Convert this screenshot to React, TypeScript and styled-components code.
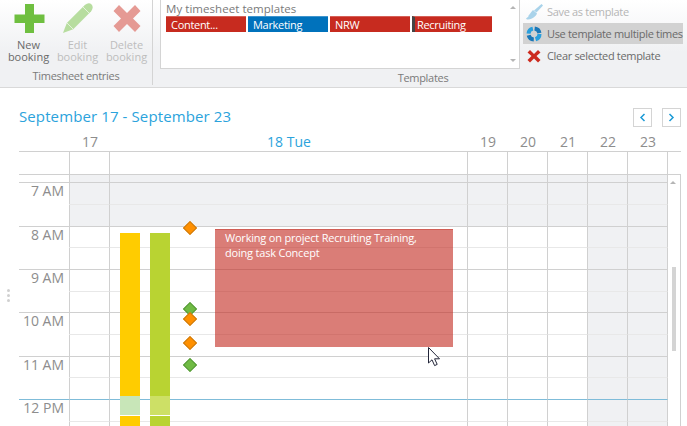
import React from "react";
import styled, { createGlobalStyle } from "styled-components";

const FONT = `"Open Sans", "Noto Sans", "Liberation Sans", sans-serif`;

const GlobalStyle = createGlobalStyle`
	html, body {
		margin: 0;
		padding: 0;
		background: #fff;
		font-family: ${FONT};
	}
`;

const SLOTS = [
	{ label: "7 AM", height: 22, line: "half", gray: true },
	{ label: "", height: 22, line: "hour", gray: true },
	{ label: "8 AM", height: 21, line: "half", gray: false },
	{ label: "", height: 22, line: "hour", gray: false },
	{ label: "9 AM", height: 22, line: "half", gray: false },
	{ label: "", height: 21, line: "hour", gray: false },
	{ label: "10 AM", height: 22, line: "half", gray: false },
	{ label: "", height: 22, line: "hour", gray: false },
	{ label: "11 AM", height: 21, line: "half", gray: false },
	{ label: "", height: 22, line: "now", gray: false },
	{ label: "12 PM", height: 22, line: "half", gray: false },
	{ label: "", height: 22, line: "hour", gray: false },
];

const DAYS = [
	{ label: "17", weekend: false },
	{ label: "18 Tue", weekend: false, today: true },
	{ label: "19", weekend: false },
	{ label: "20", weekend: false },
	{ label: "21", weekend: false },
	{ label: "22", weekend: true },
	{ label: "23", weekend: true },
];

const CHIPS = [
	{ label: "Content...", color: "#c72b1f" },
	{ label: "Marketing", color: "#0072bc" },
	{ label: "NRW", color: "#c72b1f" },
	{ label: "Recruiting", color: "#c72b1f", marked: true },
];

const DIAMONDS = [
	{ top: 76, color: "#ff9000", edge: "#c97a10" },
	{ top: 157, color: "#70bb44", edge: "#55983a" },
	{ top: 167, color: "#ff9000", edge: "#c97a10" },
	{ top: 191, color: "#ff9000", edge: "#c97a10" },
	{ top: 213, color: "#70bb44", edge: "#55983a" },
];

const App = () => {
	return (
		<Page>
			<GlobalStyle />
			<Ribbon>
				<EntriesGroup>
					<BigButtons>
						<BigButton>
							<IconSlot>
								<svg width="32" height="32" viewBox="0 0 32 32">
									<path d="M12 2h9v10.5h10.5v8.5H21v10H12V21H1.5v-8.5H12z" fill="#6fbf40" />
								</svg>
							</IconSlot>
							New
							<br />
							booking
						</BigButton>
						<BigButton $disabled>
							<IconSlot>
								<svg width="32" height="32" viewBox="0 0 32 32">
									<path
										d="M1 31L4.8 21 22.8 3Q27 0 29.5 2.5 32 5 29.2 9.2L11.2 27.2z"
										fill="#b7dd9f"
									/>
									<path d="M21 5l6 6M5 21l6 6" stroke="#e4f2da" strokeWidth="1" fill="none" />
								</svg>
							</IconSlot>
							Edit
							<br />
							booking
						</BigButton>
						<BigButton $disabled>
							<IconSlot>
								<svg width="32" height="32" viewBox="0 0 32 32">
									<path
										d="M8 3L16 11 24 3 29.5 9 22 16.5 29.5 24 24 30 16 22 8 30 2.5 24 10 16.5 2.5 9z"
										fill="#e59a94"
									/>
								</svg>
							</IconSlot>
							Delete
							<br />
							booking
						</BigButton>
					</BigButtons>
					<GroupLabel>Timesheet entries</GroupLabel>
				</EntriesGroup>
				<TemplatesGroup>
					<TemplatesTop>
						<TemplateBox>
							<TemplateList>
								<TemplateTitle>My timesheet templates</TemplateTitle>
								<ChipRow>
									{CHIPS.map((chip) => (
										<Chip key={chip.label} $color={chip.color} $marked={chip.marked}>
											{chip.label}
										</Chip>
									))}
								</ChipRow>
							</TemplateList>
							<BoxArrows>
								<ArrowUp />
								<ArrowDown />
							</BoxArrows>
						</TemplateBox>
						<ActionList>
							<Action $disabled>
								<svg width="18" height="18" viewBox="0 0 18 18">
									<path d="M16.5 1L18 2.5 11.5 9.5 9 7.5z" fill="#a9d3ea" />
									<path
										d="M8 7L12 10.5C11 13 8 16 3 16.5 2 16.5 1 16 1 15.5 3 14 4 13 3.5 12.5 5 11 6.5 8.5 8 7z"
										fill="#a9d3ea"
									/>
								</svg>
								Save as template
							</Action>
							<Action $active>
								<svg width="18" height="18" viewBox="0 0 18 18">
									<circle
										cx="9"
										cy="9"
										r="5.5"
										fill="none"
										stroke="#2a9fdc"
										strokeWidth="4"
										strokeDasharray="6.8 10.48"
									/>
									<circle
										cx="9"
										cy="9"
										r="5.5"
										fill="none"
										stroke="#1b78b8"
										strokeWidth="4"
										strokeDasharray="6.8 10.48"
										strokeDashoffset="8.64"
									/>
								</svg>
								Use template multiple times
							</Action>
							<Action>
								<svg width="18" height="18" viewBox="0 0 18 18">
									<path
										d="M5 3L9 7 13 3 15.5 5.5 11.5 9 15.5 13 13 15.5 9 11.5 5 15.5 2.5 13 6.5 9 2.5 5.5z"
										fill="#cc2a1e"
									/>
								</svg>
								Clear selected template
							</Action>
						</ActionList>
					</TemplatesTop>
					<TemplatesLabel>Templates</TemplatesLabel>
				</TemplatesGroup>
			</Ribbon>

			<Calendar>
				<TitleRow>
					<RangeTitle>September 17 - September 23</RangeTitle>
					<PagerButtons>
						<PagerButton>
							<svg width="7" height="9" viewBox="0 0 7 9">
								<path d="M5.5 1L2 4.5 5.5 8" fill="none" stroke="#1b9ad6" strokeWidth="1.5" />
							</svg>
						</PagerButton>
						<PagerButton>
							<svg width="7" height="9" viewBox="0 0 7 9">
								<path d="M1.5 1L5 4.5 1.5 8" fill="none" stroke="#1b9ad6" strokeWidth="1.5" />
							</svg>
						</PagerButton>
					</PagerButtons>
				</TitleRow>

				<DayHeader>
					<span />
					{DAYS.map((day) => (
						<DayLabel key={day.label} $today={day.today}>
							{day.label}
						</DayLabel>
					))}
				</DayHeader>

				<Columns>
					<AllDayRow>
						<GutterCell />
						{DAYS.map((day) => (
							<GutterCell key={day.label} />
						))}
					</AllDayRow>
					<BandRow>
						<GutterCell />
						{DAYS.map((day) => (
							<BandCell key={day.label} />
						))}
					</BandRow>
					{SLOTS.map((slot, i) => (
						<SlotRow key={i} $height={slot.height}>
							<TimeCell $line={slot.line}>{slot.label}</TimeCell>
							{DAYS.map((day) => (
								<DayCell
									key={day.label}
									$line={slot.line}
									$gray={slot.gray || day.weekend}
								/>
							))}
						</SlotRow>
					))}

					<Bar $left={101} $color="#ffcc00" $pale="#c8e6b8" />
					<Bar $left={131} $color="#b9d332" $pale="#cde066" />
					{DIAMONDS.map((d) => (
						<Diamond key={d.top} $top={d.top} $color={d.color} $edge={d.edge} />
					))}
					<Booking>
						Working on project Recruiting Training,
						<br />
						doing task Concept
					</Booking>
					<Cursor width="13" height="20" viewBox="0 0 13 20">
						<path
							d="M0.5 0.5V16L4 12.8 6.6 18.6 9.2 17.4 6.6 11.8H11.5z"
							fill="#fff"
							stroke="#23263a"
							strokeWidth="1"
						/>
					</Cursor>
				</Columns>

				<ScrollTrack>
					<ArrowUp />
					<ScrollThumb />
				</ScrollTrack>
			</Calendar>

			<Grip>
				<GripDot />
				<GripDot />
				<GripDot />
			</Grip>
		</Page>
	);
};

const Page = styled.div`
	position: relative;
	width: 687px;
	height: 426px;
	overflow: hidden;
	background: #fff;
	color: #6f6f6f;
`;

const Ribbon = styled.div`
	display: flex;
	height: 88px;
	box-sizing: border-box;
	border-bottom: 1px solid #d9d9d9;
	background: linear-gradient(#ffffff, #f0f1f3 60%);
`;

const EntriesGroup = styled.div`
	display: flex;
	flex-direction: column;
	width: 153px;
	height: 85px;
	box-sizing: border-box;
	border-right: 1px solid #d4d4d4;
`;

const BigButtons = styled.div`
	display: flex;
	flex: 1;
	padding-left: 4px;
`;

const BigButton = styled.div<{ $disabled?: boolean }>`
	width: 49px;
	font-size: 11px;
	line-height: 12px;
	text-align: center;
	color: ${(p) => (p.$disabled ? "#bdbdbd" : "#6a6a6a")};
`;

const IconSlot = styled.div`
	display: flex;
	justify-content: center;
	height: 39px;
	padding-top: 2px;
	box-sizing: border-box;
`;

const GroupLabel = styled.div`
	height: 17px;
	font-size: 11px;
	line-height: 15px;
	letter-spacing: -0.3px;
	text-align: center;
	color: #7a7a7a;
`;

const TemplatesLabel = styled(GroupLabel)`
	padding-left: 6px;
`;

const TemplatesGroup = styled.div`
	display: flex;
	flex: 1;
	flex-direction: column;
`;

const TemplatesTop = styled.div`
	display: flex;
	flex: 1;
	padding-left: 7px;
`;

const TemplateBox = styled.div`
	display: flex;
	justify-content: space-between;
	width: 360px;
	height: 69px;
	box-sizing: border-box;
	border: 1px solid #d4d4d4;
	border-top: none;
	background: #fff;
`;

const TemplateList = styled.div`
	padding-left: 5px;
`;

const TemplateTitle = styled.div`
	height: 16px;
	font-size: 11.5px;
	line-height: 18px;
	letter-spacing: 0.05px;
	color: #7a7a7a;
`;

const ChipRow = styled.div`
	display: flex;
	gap: 2px;
`;

const Chip = styled.div<{ $color: string; $marked?: boolean }>`
	width: 80px;
	height: 16px;
	box-sizing: border-box;
	padding-left: ${(p) => (p.$marked ? 2 : 5)}px;
	border-top: 1px solid rgba(255, 255, 255, 0.25);
	border-left: ${(p) => (p.$marked ? "3px solid #444" : "none")};
	background: ${(p) => p.$color};
	color: #fff;
	font-size: 11px;
	line-height: 15px;
	letter-spacing: -0.3px;
`;

const BoxArrows = styled.div`
	display: flex;
	flex-direction: column;
	justify-content: space-between;
	align-items: center;
	width: 12px;
	padding: 6px 0;
	box-sizing: border-box;
`;

const ArrowUp = styled.div`
	width: 0;
	height: 0;
	border-left: 3px solid transparent;
	border-right: 3px solid transparent;
	border-bottom: 3px solid #b5b5b5;
`;

const ArrowDown = styled(ArrowUp)`
	border-bottom: none;
	border-top: 3px solid #b5b5b5;
`;

const ActionList = styled.div`
	display: flex;
	flex-direction: column;
	gap: 1px;
	padding-left: 3px;
	padding-top: 1px;
`;

const Action = styled.div<{ $disabled?: boolean; $active?: boolean }>`
	display: flex;
	align-items: center;
	gap: 4px;
	width: 160px;
	height: 21px;
	padding-left: 2px;
	box-sizing: border-box;
	font-size: 11px;
	letter-spacing: -0.32px;
	white-space: nowrap;
	color: ${(p) => (p.$disabled ? "#b5b5b5" : "#6a6a6a")};
	background: ${(p) => (p.$active ? "#d2d2d2" : "transparent")};

	svg {
		flex: none;
	}
`;

const Calendar = styled.div`
	display: grid;
	grid-template-columns: 649px 13px;
	padding-left: 19px;
`;

const TitleRow = styled.div`
	grid-column: 1 / 3;
	display: flex;
	justify-content: space-between;
	align-items: flex-start;
	height: 43px;
	padding-top: 20px;
	box-sizing: border-box;
`;

const RangeTitle = styled.div`
	margin-top: -2px;
	font-size: 15px;
	line-height: 20px;
	letter-spacing: 0.11px;
	color: #2ba3dc;
`;

const PagerButtons = styled.div`
	display: flex;
	gap: 10px;
`;

const PagerButton = styled.div`
	display: flex;
	align-items: center;
	justify-content: center;
	width: 19px;
	height: 19px;
	box-sizing: border-box;
	border: 1px solid #d4d4d4;
`;

const DayHeader = styled.div`
	grid-column: 1 / 3;
	display: grid;
	grid-template-columns: 51px 40px 358px repeat(5, 40px);
	height: 21px;
	box-sizing: border-box;
	border-bottom: 1px solid #d0d0d0;
`;

const DayLabel = styled.div<{ $today?: boolean }>`
	text-align: center;
	font-size: 14px;
	line-height: 22px;
	color: ${(p) => (p.$today ? "#2ba3dc" : "#8d8d8d")};
`;

const Columns = styled.div`
	position: relative;
	height: 274px;
	overflow: hidden;
`;

const rowGrid = `
	display: grid;
	grid-template-columns: 51px 40px 358px repeat(5, 40px);
	box-sizing: border-box;
`;

const AllDayRow = styled.div`
	${rowGrid}
	height: 23px;
	border-bottom: 1px solid #d0d0d0;
`;

const GutterCell = styled.div`
	border-right: 1px solid #d0d0d0;
`;

const BandRow = styled.div`
	${rowGrid}
	height: 8px;
	border-bottom: 1px solid #d0d0d0;
`;

const BandCell = styled.div`
	background: #f0f1f3;
	border-right: 1px solid #d0d0d0;
`;

const SlotRow = styled.div<{ $height: number }>`
	${rowGrid}
	height: ${(p) => p.$height}px;
`;

const lineColor = (line: string) =>
	line === "now" ? "#7fbcd9" : line === "hour" ? "#d0d0d0" : "#e8e8e8";

const TimeCell = styled.div<{ $line: string }>`
	padding-right: 5px;
	box-sizing: border-box;
	text-align: right;
	font-size: 14px;
	line-height: 16px;
	white-space: nowrap;
	color: #8d8d8d;
	border-right: 1px solid #d0d0d0;
	border-bottom: 1px solid
		${(p) => (p.$line === "half" ? "transparent" : lineColor(p.$line))};
`;

const DayCell = styled.div<{ $line: string; $gray: boolean }>`
	box-sizing: border-box;
	background: ${(p) => (p.$gray ? "#f0f1f3" : "#fff")};
	border-right: 1px solid #d0d0d0;
	border-bottom: 1px solid ${(p) => lineColor(p.$line)};
`;

const Bar = styled.div<{ $left: number; $color: string; $pale: string }>`
	position: absolute;
	left: ${(p) => p.$left}px;
	top: 81px;
	width: 20px;
	height: 193px;
	background: linear-gradient(
		${(p) => p.$color} 163px,
		${(p) => p.$pale} 163px,
		${(p) => p.$pale} 182px,
		#fff 182px,
		#fff 183px,
		${(p) => p.$color} 183px
	);
`;

const Diamond = styled.div<{ $top: number; $color: string; $edge: string }>`
	position: absolute;
	left: 166px;
	top: ${(p) => p.$top - 5}px;
	width: 10px;
	height: 10px;
	box-sizing: border-box;
	transform: rotate(45deg);
	background: ${(p) => p.$color};
	border: 1px solid ${(p) => p.$edge};
`;

const Booking = styled.div`
	position: absolute;
	left: 196px;
	top: 77px;
	width: 238px;
	height: 118px;
	box-sizing: border-box;
	padding: 0 0 0 10px;
	border-top: 1px solid rgba(196, 45, 35, 0.4);
	background: rgba(196, 45, 35, 0.62);
	color: #fff;
	font-size: 11px;
	line-height: 15px;
	letter-spacing: -0.2px;
`;

const Cursor = styled.svg`
	position: absolute;
	left: 409px;
	top: 195px;
`;

const ScrollTrack = styled.div`
	position: relative;
	height: 252px;
	margin-top: 22px;
	box-sizing: border-box;
	border-top: 1px solid #d0d0d0;
	border-right: 1px solid #d0d0d0;
	padding: 6px 0 0 2px;
`;

const ScrollThumb = styled.div`
	position: absolute;
	left: 4px;
	top: 92px;
	width: 4px;
	height: 84px;
	background: #d4d4d4;
`;

const Grip = styled.div`
	position: absolute;
	left: 7px;
	top: 289px;
	display: flex;
	flex-direction: column;
	gap: 2px;
`;

const GripDot = styled.div`
	width: 3px;
	height: 3px;
	border-radius: 50%;
	background: #d0d0d0;
`;

export default App;
